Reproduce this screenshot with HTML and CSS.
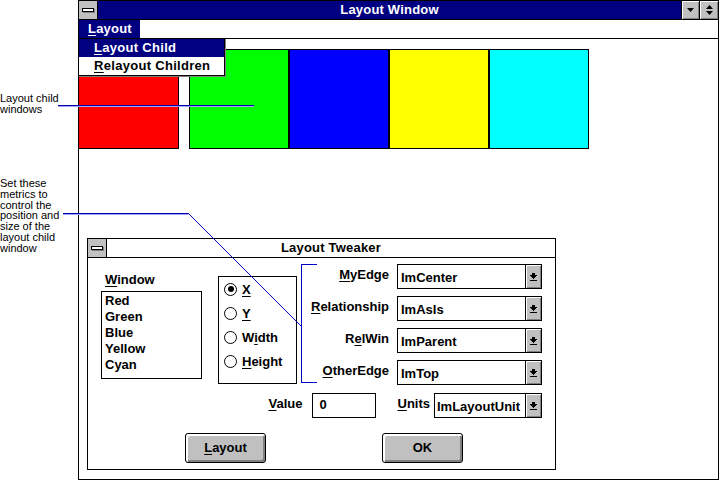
FILE: index.html
```html
<!DOCTYPE html>
<html>
<head>
<meta charset="utf-8">
<link rel="stylesheet" href="styles.css">
</head>
<body>
<div class="note note-a">Layout child<br>windows</div>
<div class="note note-b">Set these<br>metrics to<br>control the<br>position and<br>size of the<br>layout child<br>window</div>

<div class="win main">
  <div class="titlebar active">
    <div class="sysbox"><span class="sysbar"></span></div>
    <div class="title">Layout Window</div>
    <div class="tbtn"><svg width="7" height="4" viewBox="0 0 7 4"><path d="M0 0h7l-3.5 4z"/></svg></div>
    <div class="tbtn wide"><svg width="7" height="10" viewBox="0 0 7 10"><path d="M3.5 0L7 4H0z M0 6h7l-3.5 4z"/></svg></div>
  </div>
  <div class="menubar">
    <div class="menu-item open"><u>L</u>ayout</div>
  </div>
  <div class="client">
    <div class="child red"></div>
    <div class="child green"></div>
    <div class="child blue"></div>
    <div class="child yellow"></div>
    <div class="child cyan"></div>
  </div>
  <div class="dropdown">
    <div class="dd-item sel"><u>L</u>ayout Child</div>
    <div class="dd-item"><u>R</u>elayout Children</div>
  </div>
</div>

<div class="win tweaker">
  <div class="titlebar">
    <div class="sysbox"><span class="sysbar"></span></div>
    <div class="title">Layout Tweaker</div>
  </div>
  <div class="dlg">
    <div class="top">
      <div class="col-win">
        <div class="lbl"><u>W</u>indow</div>
        <div class="listbox">
          <div>Red</div>
          <div>Green</div>
          <div>Blue</div>
          <div>Yellow</div>
          <div>Cyan</div>
        </div>
      </div>
      <div class="radios">
        <div class="radio"><span class="dot on"></span><span><u>X</u></span></div>
        <div class="radio"><span class="dot"></span><span><u>Y</u></span></div>
        <div class="radio"><span class="dot"></span><span>W<u>i</u>dth</span></div>
        <div class="radio"><span class="dot"></span><span><u>H</u>eight</span></div>
      </div>
      <div class="fields">
        <div class="flabel"><u>M</u>yEdge</div>
        <div class="combo"><span class="val">ImCenter</span><span class="drop"><svg width="7" height="8" viewBox="0 0 7 8"><path d="M2 0h3v2h2v1h-1v1h-1v1h-1v1h-1v-1h-1v-1h-1v-1h-1v-1h2z M0 7h7v1H0z"/></svg></span></div>
        <div class="flabel"><u>R</u>elationship</div>
        <div class="combo"><span class="val">ImAsIs</span><span class="drop"><svg width="7" height="8" viewBox="0 0 7 8"><path d="M2 0h3v2h2v1h-1v1h-1v1h-1v1h-1v-1h-1v-1h-1v-1h-1v-1h2z M0 7h7v1H0z"/></svg></span></div>
        <div class="flabel">R<u>e</u>lWin</div>
        <div class="combo"><span class="val">ImParent</span><span class="drop"><svg width="7" height="8" viewBox="0 0 7 8"><path d="M2 0h3v2h2v1h-1v1h-1v1h-1v1h-1v-1h-1v-1h-1v-1h-1v-1h2z M0 7h7v1H0z"/></svg></span></div>
        <div class="flabel"><u>O</u>therEdge</div>
        <div class="combo"><span class="val">ImTop</span><span class="drop"><svg width="7" height="8" viewBox="0 0 7 8"><path d="M2 0h3v2h2v1h-1v1h-1v1h-1v1h-1v-1h-1v-1h-1v-1h-1v-1h2z M0 7h7v1H0z"/></svg></span></div>
      </div>
    </div>
    <div class="valrow">
      <div class="flabel"><u>V</u>alue</div>
      <div class="edit">0</div>
      <div class="flabel units-lbl"><u>U</u>nits</div>
      <div class="combo units"><span class="val">ImLayoutUnit</span><span class="drop"><svg width="7" height="8" viewBox="0 0 7 8"><path d="M2 0h3v2h2v1h-1v1h-1v1h-1v1h-1v-1h-1v-1h-1v-1h-1v-1h2z M0 7h7v1H0z"/></svg></span></div>
    </div>
    <div class="btnrow">
      <div class="btn"><u>L</u>ayout</div>
      <div class="btn">OK</div>
    </div>
  </div>
</div>

<svg class="callouts" width="720" height="480" viewBox="0 0 720 480">
  <g shape-rendering="crispEdges" fill="none">
    <path d="M58 105.5H254" stroke="#0000a8"/>
    <path d="M58 106.5H254" stroke="#a0a0ff"/>
    <path d="M63 213.5H188" stroke="#0000a8"/>
    <path d="M63 214.5H188" stroke="#a0a0ff"/>
    <path d="M188 213L301 326" stroke="#0000c8"/>
    <path d="M317 264.5H301.5V382.5H317" stroke="#0000c8"/>
  </g>
</svg>
</body>
</html>
```

FILE: styles.css
```css
* { box-sizing: border-box; }

html, body {
  margin: 0;
  padding: 0;
}

body {
  width: 720px;
  height: 480px;
  position: relative;
  overflow: hidden;
  background: #fff;
  font-family: "Liberation Sans", Arial, sans-serif;
  font-size: 13px;
  font-weight: bold;
  color: #000;
}

u { text-decoration: underline; text-underline-offset: 2px; }

.note {
  position: absolute;
  left: 0;
  font-size: 11px;
  font-weight: normal;
  line-height: 10.8px;
}
.note-a { top: 93px; }
.note-b { top: 178px; }

.win {
  position: absolute;
  border: 1px solid #000;
  background: #fff;
  display: flex;
  flex-direction: column;
}

.main {
  left: 78px;
  top: 0;
  width: 641px;
  height: 480px;
}

.tweaker {
  left: 87px;
  top: 238px;
  width: 469px;
  height: 232px;
  z-index: 2;
}

.titlebar {
  height: 19px;
  flex: none;
  display: flex;
  border-bottom: 1px solid #000;
  background: #fff;
}
.titlebar.active { background: #000080; color: #fff; }

.sysbox {
  width: 19px;
  flex: none;
  background: #c0c0c0;
  border-right: 1px solid #000;
  display: flex;
  align-items: center;
  justify-content: center;
}
.sysbar {
  display: block;
  width: 12px;
  height: 4px;
  border: 1px solid #000;
  background: #fff;
  box-shadow: 1px 1px 0 #808080;
  margin-top: -1px;
}

.title {
  flex: 1;
  text-align: center;
  line-height: 18px;
  letter-spacing: 0.2px;
}

.tbtn {
  width: 18px;
  flex: none;
  background: #c0c0c0;
  border-left: 1px solid #000;
  box-shadow: inset 1px 1px 0 #fff, inset -1px -1px 0 #808080;
  display: flex;
  align-items: center;
  justify-content: center;
}
.tbtn.wide { width: 19px; }

.menubar {
  height: 19px;
  flex: none;
  display: flex;
  border-bottom: 1px solid #000;
}
.menu-item {
  padding: 0 8px 0 9px;
  line-height: 18px;
  letter-spacing: 0.2px;
}
.menu-item.open { background: #000080; color: #fff; }

.client {
  flex: 1;
  display: flex;
  align-items: flex-start;
  padding-top: 10px;
}
.child {
  width: 100px;
  height: 100px;
  border: 1px solid #000;
  flex: none;
}
.red { background: #ff0000; border-left: none; margin-right: 10px; }
.green { background: #00ff00; }
.blue { background: #0000ff; }
.yellow { background: #ffff00; }
.cyan { background: #00ffff; }

.dropdown {
  position: absolute;
  left: -1px;
  top: 37px;
  width: 147px;
  border: 1px solid #000;
  background: #fff;
  box-shadow: 1px 1px 0 #808080;
  z-index: 3;
}
.dd-item {
  height: 18px;
  line-height: 18px;
  padding-left: 15px;
  letter-spacing: 0.3px;
}
.dd-item.sel { background: #000080; color: #fff; }

.dlg {
  flex: 1;
  padding: 6px 13px 0 13px;
  display: flex;
  flex-direction: column;
}

.top {
  display: flex;
  align-items: flex-start;
}

.col-win {
  width: 101px;
  margin-top: 8px;
  flex: none;
}
.lbl {
  height: 16px;
  line-height: 16px;
  padding-left: 4px;
  margin-bottom: 3px;
}
.listbox {
  height: 88px;
  border: 1px solid #000;
  padding: 1px 3px 0;
  line-height: 16px;
}

.radios {
  width: 79px;
  height: 108px;
  margin: 12px 0 0 16px;
  border: 1px solid #000;
  padding-left: 5px;
  flex: none;
}
.radio {
  height: 24px;
  display: flex;
  align-items: center;
  gap: 5px;
}
.dot {
  width: 13px;
  height: 13px;
  border: 1px solid #000;
  border-radius: 50%;
  position: relative;
  flex: none;
}
.dot.on::after {
  content: "";
  position: absolute;
  left: 2.5px;
  top: 2.5px;
  width: 6px;
  height: 6px;
  border-radius: 50%;
  background: #000;
}

.fields {
  margin-left: 3px;
  display: grid;
  grid-template-columns: 89px 145px;
  grid-auto-rows: 25px;
  column-gap: 8px;
  row-gap: 7px;
}
.flabel {
  text-align: right;
  align-self: center;
  line-height: 16px;
  padding-bottom: 3px;
  white-space: nowrap;
}

.combo {
  width: 145px;
  height: 25px;
  border: 1px solid #000;
  display: flex;
  align-items: center;
  background: #fff;
}
.combo .val {
  flex: 1;
  padding: 3px 0 0 3px;
  line-height: 16px;
  white-space: nowrap;
  overflow: hidden;
}
.combo .drop {
  width: 16px;
  align-self: stretch;
  border-left: 1px solid #000;
  background: #c0c0c0;
  box-shadow: inset 1px 1px 0 #fff, inset -1px -1px 0 #808080;
  display: flex;
  align-items: center;
  justify-content: center;
}

.valrow {
  display: flex;
  justify-content: flex-end;
  align-items: center;
  margin-top: 8px;
  height: 25px;
}
.edit {
  width: 64px;
  height: 25px;
  border: 1px solid #000;
  margin-left: 10px;
  padding: 3px 0 0 6px;
  line-height: 16px;
}
.units-lbl { margin-left: 21px; }
.combo.units { width: 108px; margin-left: 4px; }
.combo.units .val { padding-left: 2px; }

.btnrow {
  display: flex;
  gap: 116px;
  padding-left: 84px;
  margin-top: 15px;
}
.btn {
  width: 81px;
  height: 30px;
  border: 1px solid #000;
  border-radius: 3px;
  background: #c0c0c0;
  box-shadow: inset 1px 1px 0 #fff, inset 2px 2px 0 #fff, inset -1px -1px 0 #808080, inset -2px -2px 0 #808080;
  display: flex;
  align-items: center;
  justify-content: center;
  padding-bottom: 1px;
}

.callouts {
  position: absolute;
  left: 0;
  top: 0;
  z-index: 10;
  pointer-events: none;
}
```
